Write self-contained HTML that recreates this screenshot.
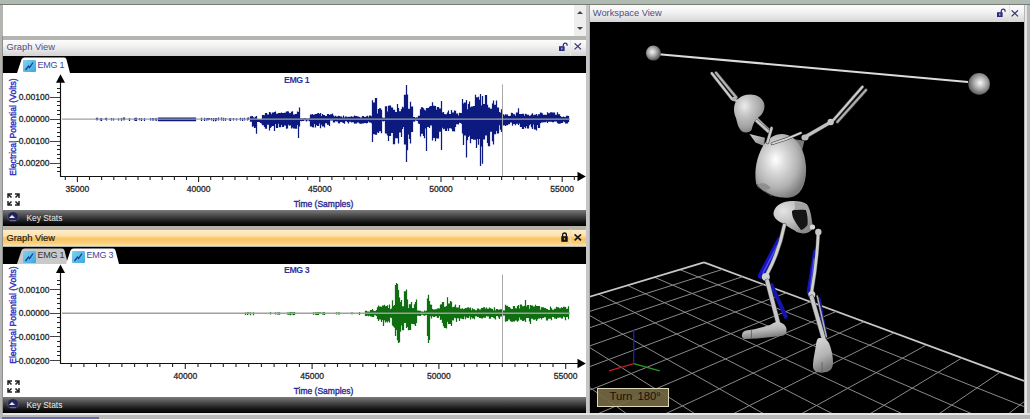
<!DOCTYPE html><html><head><meta charset="utf-8"><style>
html,body{margin:0;padding:0;}
body{width:1030px;height:419px;overflow:hidden;position:relative;background:#b1bab0;font-family:"Liberation Sans", sans-serif;}
.a{position:absolute;}
.t{position:absolute;white-space:nowrap;}
</style></head><body>
<div class="a" style="left:0;top:4px;width:590px;height:415px;background:#b3b5b1;"></div>
<div class="a" style="left:2px;top:36px;width:1px;height:377px;background:#8e8e8e;"></div>
<div class="a" style="left:0;top:4px;width:1030px;height:1px;background:#747c73;"></div>
<div class="a" style="left:3px;top:5px;width:571px;height:31px;background:#fff;"></div>
<div class="a" style="left:574px;top:5px;width:12px;height:31px;background:#eeeeee;"></div>
<div class="a" style="left:577px;top:11px;width:0;height:0;border-left:3px solid transparent;border-right:3px solid transparent;border-bottom:3px solid #444;"></div>
<div class="a" style="left:577px;top:27px;width:0;height:0;border-left:3px solid transparent;border-right:3px solid transparent;border-top:3px solid #444;"></div>
<div class="a" style="left:3px;top:40px;width:583px;height:16px;background:linear-gradient(#fcfcfc,#f1f1f1 40%,#d3d3d3);"></div>
<div class="t" style="left:6.50px;top:42.30px;font-size:9.3px;line-height:11.16px;color:#4e4e7e;font-weight:normal;">Graph View</div>
<div class="a" style="left:570px;top:40px;width:1px;height:16px;background:#e8e8e8;"></div>
<svg class="a" style="left:559.4px;top:42px" width="10" height="10" viewBox="0 0 10 10">
<path d="M4.3 4.6 V3 A1.9 1.9 0 0 1 8.1 3 V3.8" fill="none" stroke="#2a2a80" stroke-width="1.2"/>
<rect x="0" y="4.2" width="5.6" height="4.8" fill="#2a2a80"/><rect x="2.2" y="5.6" width="1.2" height="2" fill="#c8c8e0"/></svg>
<svg class="a" style="left:573.8px;top:43.4px" width="8" height="7" viewBox="0 0 8 7">
<path d="M0.6 0.4 L7 6.4 M7 0.4 L0.6 6.4" stroke="#3a3a70" stroke-width="1.3"/></svg>
<div class="a" style="left:3px;top:56.400000000000006px;width:583px;height:17px;background:#000;"></div>
<svg class="a" style="left:17px;top:56px" width="54" height="18" viewBox="0 0 54 18"><path d="M0 17 L4.5 3.5 Q5.5 1.5 7.5 1.5 L47 1.5 Q49 1.5 49.5 3.5 L53 17 Z" fill="#ffffff"/></svg>
<div class="a" style="left:23px;top:60px;width:13px;height:12px;background:linear-gradient(135deg,#7fd3ef,#3aa8dc);border-radius:1px;"></div>
<svg class="a" style="left:23px;top:60px" width="13" height="12" viewBox="0 0 13 12"><path d="M2.5 10 L5.5 6 L6.5 7.5 L10 2.5" fill="none" stroke="#1a3a9a" stroke-width="1.3"/></svg>
<div class="t" style="left:37.60px;top:59.88px;font-size:9px;line-height:10.80px;color:#45459a;font-weight:normal;letter-spacing:-0.3px;">EMG 1</div>
<div class="a" style="left:3px;top:73.4px;width:583px;height:136.6px;background:#fff;"></div>
<svg class="a" style="left:0;top:0" width="590" height="419" viewBox="0 0 590 419"><path d="M96.5 117.8V120.2M97.5 117.8V120.2M100.5 118.3V120.6M101.5 118.0V121.0M105.5 117.9V120.1M106.5 117.7V120.5M111.5 117.9V120.4M113.5 118.3V120.4M118.5 118.3V120.4M121.5 117.9V120.8M123.5 117.6V120.3M124.5 117.6V120.3M129.5 117.9V121.0M134.5 118.3V120.5M135.5 117.8V120.9M136.5 117.8V120.9M139.5 118.0V120.3M141.5 118.1V121.0M144.5 118.1V121.0M150.5 118.0V120.6M152.5 118.0V120.6M153.5 118.2V120.4M155.5 118.2V120.4M156.5 118.2V120.8M158.5 117.4V121.2M159.5 117.4V121.2M160.5 117.4V121.2M161.5 117.4V121.2M162.5 117.4V121.2M163.5 117.4V121.2M164.5 117.4V121.2M165.5 117.4V121.2M166.5 117.4V121.2M167.5 117.4V121.2M168.5 117.4V121.2M169.5 117.4V121.2M170.5 117.4V121.2M171.5 117.4V121.2M172.5 117.4V121.2M173.5 117.4V121.2M174.5 117.4V121.2M175.5 117.4V121.2M176.5 117.4V121.2M177.5 117.4V121.2M178.5 117.4V121.2M179.5 117.4V121.2M180.5 117.4V121.2M181.5 117.4V121.2M182.5 117.4V121.2M183.5 117.4V121.2M184.5 117.4V121.2M185.5 117.4V121.2M186.5 117.4V121.2M187.5 117.4V121.2M188.5 117.4V121.2M189.5 117.4V121.2M190.5 117.4V121.2M191.5 117.4V121.2M192.5 117.4V121.2M193.5 117.4V121.2M194.5 117.4V121.2M195.5 117.4V121.2M201.5 117.7V121.0M204.5 117.7V121.0M206.5 118.3V120.4M207.5 117.9V120.2M208.5 117.9V120.2M209.5 118.0V120.1M211.5 118.1V120.6M213.5 117.9V121.2M215.5 117.9V121.2M216.5 118.1V120.5M218.5 117.6V120.6M221.5 117.6V120.6M223.5 117.7V120.8M225.5 117.9V120.7M229.5 118.2V120.6M230.5 117.9V121.0M233.5 117.9V120.6M236.5 118.2V120.4M240.5 117.7V120.6M242.5 118.0V120.9M244.5 117.7V120.5M247.5 117.7V120.5M248.5 117.6V120.1M250.5 116.3V121.7M251.5 116.3V121.7M252.5 116.0V126.7M253.5 117.3V126.2M254.5 117.7V127.9M255.5 116.7V127.8M256.5 116.0V133.8M257.5 119.0V121.9M258.5 119.1V121.9M259.5 119.1V121.9M260.5 119.0V122.9M261.5 119.0V123.4M262.5 114.9V125.2M263.5 114.9V125.2M264.5 115.3V127.1M265.5 113.1V128.7M266.5 113.1V128.7M267.5 114.6V124.8M268.5 114.6V124.8M269.5 112.0V130.5M270.5 112.4V128.1M271.5 114.3V126.7M272.5 112.6V125.9M273.5 112.6V125.9M274.5 112.0V131.0M275.5 111.4V124.0M276.5 113.8V128.0M277.5 113.8V128.0M278.5 113.0V123.7M279.5 113.0V127.3M280.5 113.0V127.3M281.5 112.4V125.1M282.5 113.0V127.0M283.5 113.0V127.0M284.5 112.8V125.4M285.5 112.8V125.4M286.5 111.4V128.8M287.5 111.3V128.6M288.5 111.5V124.7M289.5 113.3V125.8M290.5 113.1V125.2M291.5 111.7V128.6M292.5 111.2V127.5M293.5 114.5V128.5M294.5 114.5V128.5M295.5 114.1V128.8M296.5 114.1V128.8M297.5 111.4V124.9M298.5 112.0V138.0M299.5 107.5V126.4M300.5 118.3V120.9M301.5 118.4V121.2M302.5 118.3V120.9M303.5 118.3V121.0M304.5 118.2V120.3M305.5 118.0V120.4M306.5 118.4V121.4M307.5 118.4V120.4M308.5 118.4V120.4M309.5 118.1V121.2M310.5 114.6V126.5M311.5 114.6V126.5M312.5 114.1V127.2M313.5 115.0V127.6M314.5 114.5V123.9M315.5 113.9V127.6M316.5 114.0V124.9M317.5 113.3V126.1M318.5 112.9V125.9M319.5 113.9V123.6M320.5 113.1V128.3M321.5 116.1V124.8M322.5 113.9V126.5M323.5 115.0V126.3M324.5 115.1V127.6M325.5 116.1V123.3M326.5 116.1V123.3M327.5 114.1V124.7M328.5 114.1V124.7M329.5 115.1V126.1M330.5 114.2V120.6M331.5 114.2V120.6M332.5 113.4V120.4M333.5 115.5V122.5M334.5 116.5V122.5M335.5 115.7V121.3M336.5 116.4V121.5M337.5 116.4V121.5M338.5 115.7V123.3M339.5 116.1V123.4M340.5 116.4V121.9M341.5 116.4V121.9M342.5 117.5V122.6M343.5 115.5V123.0M344.5 117.4V123.8M345.5 116.6V121.2M346.5 116.6V121.2M347.5 117.2V122.3M348.5 116.8V123.5M349.5 116.8V121.7M350.5 116.8V121.7M351.5 116.2V122.6M352.5 116.7V122.2M353.5 116.7V122.2M354.5 115.6V123.7M355.5 116.0V123.4M356.5 116.0V123.4M357.5 116.5V122.5M358.5 116.5V122.5M359.5 117.0V123.4M360.5 117.4V123.7M361.5 117.4V123.7M362.5 116.1V123.4M363.5 116.1V123.4M364.5 117.1V123.0M365.5 117.1V123.0M366.5 116.2V123.6M367.5 115.8V123.1M368.5 117.2V121.5M369.5 115.6V122.6M370.5 115.6V122.6M371.5 116.2V123.2M372.5 100.2V142.0M373.5 102.6V134.3M374.5 102.6V134.3M375.5 98.1V134.8M376.5 98.1V134.8M377.5 113.5V132.2M378.5 108.9V132.9M379.5 108.3V131.3M380.5 108.3V131.3M381.5 109.7V133.3M382.5 117.6V121.0M383.5 117.8V121.6M384.5 117.8V121.1M385.5 106.2V133.4M386.5 106.2V133.4M387.5 111.4V135.6M388.5 105.7V141.0M389.5 105.6V135.9M390.5 105.6V135.9M391.5 107.4V133.1M392.5 107.4V133.1M393.5 109.7V144.3M394.5 109.7V144.3M395.5 112.1V138.3M396.5 112.1V138.3M397.5 103.9V138.2M398.5 108.0V143.6M399.5 111.2V132.5M400.5 111.2V132.5M401.5 109.1V137.0M402.5 106.8V128.9M403.5 107.5V127.0M404.5 94.8V144.5M405.5 94.8V144.5M406.5 85.0V162.0M407.5 94.4V150.2M408.5 108.7V134.4M409.5 108.7V138.9M410.5 101.8V143.5M411.5 106.5V131.9M412.5 106.5V131.9M413.5 117.0V121.5M414.5 117.1V121.7M415.5 117.7V120.5M416.5 117.3V120.8M417.5 117.5V121.1M418.5 115.8V123.5M419.5 115.8V124.1M420.5 109.3V136.6M421.5 107.2V133.7M422.5 107.2V133.7M423.5 108.2V135.9M424.5 109.7V138.3M425.5 110.5V128.6M426.5 108.0V151.0M427.5 107.9V127.0M428.5 107.9V127.0M429.5 106.7V128.1M430.5 106.1V125.5M431.5 106.1V125.5M432.5 102.2V140.5M433.5 105.8V138.1M434.5 105.8V138.1M435.5 106.1V141.2M436.5 109.8V138.2M437.5 107.1V138.6M438.5 107.1V138.6M439.5 108.4V131.7M440.5 108.4V131.7M441.5 101.0V150.0M442.5 112.6V127.7M443.5 112.0V129.3M444.5 114.0V128.8M445.5 114.3V131.1M446.5 114.3V131.1M447.5 112.5V128.5M448.5 110.6V130.9M449.5 114.0V128.3M450.5 114.0V128.3M451.5 110.1V128.7M452.5 112.5V131.2M453.5 112.5V131.2M454.5 110.5V131.5M455.5 110.8V126.9M456.5 113.5V124.2M457.5 113.5V124.2M458.5 115.4V124.4M459.5 112.7V122.8M460.5 113.1V123.1M461.5 113.1V123.8M462.5 99.0V133.6M463.5 103.6V145.0M464.5 102.5V135.6M465.5 102.5V135.6M466.5 100.0V157.4M467.5 109.3V140.2M468.5 103.9V137.1M469.5 101.4V135.8M470.5 107.3V143.2M471.5 106.6V139.0M472.5 106.6V139.0M473.5 106.0V139.7M474.5 106.0V139.7M475.5 94.8V139.7M476.5 97.3V148.1M477.5 97.4V139.1M478.5 96.8V144.7M479.5 99.7V139.1M480.5 94.0V166.0M481.5 105.5V146.6M482.5 96.0V163.7M483.5 104.1V139.6M484.5 104.1V139.6M485.5 94.9V135.5M486.5 94.9V135.5M487.5 104.8V142.9M488.5 107.5V146.2M489.5 107.5V146.2M490.5 108.8V131.8M491.5 108.8V131.8M492.5 103.4V141.3M493.5 100.6V144.4M494.5 104.8V134.2M495.5 104.8V134.2M496.5 100.4V131.0M497.5 107.6V133.5M498.5 107.6V133.5M499.5 111.9V125.3M500.5 112.7V129.8M501.5 109.2V132.1M502.5 114.3V125.6M503.5 114.3V125.6M504.5 115.5V125.2M505.5 114.2V125.9M506.5 114.4V125.3M507.5 114.4V125.3M508.5 115.9V124.2M509.5 115.9V124.2M510.5 115.8V122.4M511.5 112.8V122.6M512.5 112.9V125.8M513.5 114.2V123.9M514.5 114.2V123.9M515.5 115.8V125.3M516.5 112.4V123.8M517.5 112.4V123.8M518.5 108.3V124.9M519.5 113.9V123.4M520.5 114.0V126.9M521.5 114.0V126.9M522.5 113.8V129.0M523.5 113.8V129.0M524.5 115.8V127.1M525.5 113.8V128.3M526.5 114.3V126.2M527.5 114.7V128.5M528.5 114.7V128.5M529.5 116.1V125.3M530.5 115.4V124.3M531.5 114.6V127.3M532.5 113.3V128.9M533.5 115.3V124.5M534.5 114.8V129.4M535.5 114.8V129.4M536.5 114.0V130.4M537.5 115.7V124.9M538.5 114.3V128.0M539.5 114.3V128.0M540.5 112.6V123.3M541.5 112.8V122.4M542.5 113.5V122.6M543.5 114.9V122.2M544.5 114.7V122.3M545.5 114.7V122.3M546.5 115.0V121.6M547.5 112.2V122.9M548.5 113.2V121.7M549.5 113.2V121.7M550.5 112.2V121.7M551.5 112.2V121.7M552.5 112.5V122.2M553.5 112.5V122.2M554.5 112.4V121.5M555.5 114.8V121.5M556.5 114.8V121.5M557.5 112.3V123.1M558.5 114.2V123.7M559.5 114.2V123.7M560.5 116.0V123.5M561.5 117.1V123.1M562.5 117.1V123.1M563.5 116.5V121.4M564.5 117.0V122.1M565.5 117.3V123.4M566.5 115.7V123.6M567.5 115.7V123.6M568.5 115.9V122.0" stroke="#0c1a80" stroke-width="1.25" fill="none"/><path d="M62 119.1H570" stroke="#a0a0a0" stroke-width="1.4"/><path d="M502.5 84.4V176" stroke="#a8a8a8" stroke-width="1"/><path d="M60.5 82.2V176.5H578" stroke="#111" stroke-width="1.15" fill="none"/><path d="M60.5 74.2 L56 82.7 L65 82.7Z" fill="#000"/><path d="M585.8 176.5 L577.5 171.8 L577.5 181.2Z" fill="#000"/><path d="M57 171.5H60" stroke="#222" stroke-width="1"/><path d="M57 167.5H60" stroke="#222" stroke-width="1"/><path d="M50 163.5H60" stroke="#444" stroke-width="1"/><path d="M57 158.5H60" stroke="#222" stroke-width="1"/><path d="M57 154.5H60" stroke="#222" stroke-width="1"/><path d="M57 149.5H60" stroke="#222" stroke-width="1"/><path d="M57 145.5H60" stroke="#222" stroke-width="1"/><path d="M50 141.5H60" stroke="#444" stroke-width="1"/><path d="M57 136.5H60" stroke="#222" stroke-width="1"/><path d="M57 132.5H60" stroke="#222" stroke-width="1"/><path d="M57 127.5H60" stroke="#222" stroke-width="1"/><path d="M57 123.5H60" stroke="#222" stroke-width="1"/><path d="M50 119.5H60" stroke="#444" stroke-width="1"/><path d="M57 114.5H60" stroke="#222" stroke-width="1"/><path d="M57 110.5H60" stroke="#222" stroke-width="1"/><path d="M57 105.5H60" stroke="#222" stroke-width="1"/><path d="M57 101.5H60" stroke="#222" stroke-width="1"/><path d="M50 97.5H60" stroke="#444" stroke-width="1"/><path d="M57 92.5H60" stroke="#222" stroke-width="1"/><path d="M57 88.5H60" stroke="#222" stroke-width="1"/><path d="M65.3 176V180" stroke="#222" stroke-width="1.1"/><path d="M77.4 176V182" stroke="#222" stroke-width="1.1"/><path d="M89.5 176V180" stroke="#222" stroke-width="1.1"/><path d="M101.6 176V180" stroke="#222" stroke-width="1.1"/><path d="M113.8 176V180" stroke="#222" stroke-width="1.1"/><path d="M125.9 176V180" stroke="#222" stroke-width="1.1"/><path d="M138.0 176V180" stroke="#222" stroke-width="1.1"/><path d="M150.1 176V180" stroke="#222" stroke-width="1.1"/><path d="M162.2 176V180" stroke="#222" stroke-width="1.1"/><path d="M174.4 176V180" stroke="#222" stroke-width="1.1"/><path d="M186.5 176V180" stroke="#222" stroke-width="1.1"/><path d="M198.6 176V182" stroke="#222" stroke-width="1.1"/><path d="M210.7 176V180" stroke="#222" stroke-width="1.1"/><path d="M222.8 176V180" stroke="#222" stroke-width="1.1"/><path d="M235.0 176V180" stroke="#222" stroke-width="1.1"/><path d="M247.1 176V180" stroke="#222" stroke-width="1.1"/><path d="M259.2 176V180" stroke="#222" stroke-width="1.1"/><path d="M271.3 176V180" stroke="#222" stroke-width="1.1"/><path d="M283.4 176V180" stroke="#222" stroke-width="1.1"/><path d="M295.6 176V180" stroke="#222" stroke-width="1.1"/><path d="M307.7 176V180" stroke="#222" stroke-width="1.1"/><path d="M319.8 176V182" stroke="#222" stroke-width="1.1"/><path d="M331.9 176V180" stroke="#222" stroke-width="1.1"/><path d="M344.0 176V180" stroke="#222" stroke-width="1.1"/><path d="M356.2 176V180" stroke="#222" stroke-width="1.1"/><path d="M368.3 176V180" stroke="#222" stroke-width="1.1"/><path d="M380.4 176V180" stroke="#222" stroke-width="1.1"/><path d="M392.5 176V180" stroke="#222" stroke-width="1.1"/><path d="M404.6 176V180" stroke="#222" stroke-width="1.1"/><path d="M416.8 176V180" stroke="#222" stroke-width="1.1"/><path d="M428.9 176V180" stroke="#222" stroke-width="1.1"/><path d="M441.0 176V182" stroke="#222" stroke-width="1.1"/><path d="M453.1 176V180" stroke="#222" stroke-width="1.1"/><path d="M465.2 176V180" stroke="#222" stroke-width="1.1"/><path d="M477.4 176V180" stroke="#222" stroke-width="1.1"/><path d="M489.5 176V180" stroke="#222" stroke-width="1.1"/><path d="M501.6 176V180" stroke="#222" stroke-width="1.1"/><path d="M513.7 176V180" stroke="#222" stroke-width="1.1"/><path d="M525.8 176V180" stroke="#222" stroke-width="1.1"/><path d="M538.0 176V180" stroke="#222" stroke-width="1.1"/><path d="M550.1 176V180" stroke="#222" stroke-width="1.1"/><path d="M562.2 176V182" stroke="#222" stroke-width="1.1"/><path d="M574.3 176V180" stroke="#222" stroke-width="1.1"/></svg>
<div class="t" style="left:-22.60px;width:200px;text-align:center;top:183.75px;font-size:8.5px;line-height:10.20px;color:#2a2a2a;font-weight:normal;-webkit-text-stroke:0.3px #2a2a2a;">35000</div>
<div class="t" style="left:98.60px;width:200px;text-align:center;top:183.75px;font-size:8.5px;line-height:10.20px;color:#2a2a2a;font-weight:normal;-webkit-text-stroke:0.3px #2a2a2a;">40000</div>
<div class="t" style="left:219.80px;width:200px;text-align:center;top:183.75px;font-size:8.5px;line-height:10.20px;color:#2a2a2a;font-weight:normal;-webkit-text-stroke:0.3px #2a2a2a;">45000</div>
<div class="t" style="left:341.00px;width:200px;text-align:center;top:183.75px;font-size:8.5px;line-height:10.20px;color:#2a2a2a;font-weight:normal;-webkit-text-stroke:0.3px #2a2a2a;">50000</div>
<div class="t" style="left:462.20px;width:200px;text-align:center;top:183.75px;font-size:8.5px;line-height:10.20px;color:#2a2a2a;font-weight:normal;-webkit-text-stroke:0.3px #2a2a2a;">55000</div>
<div class="t" style="left:-150.50px;width:200px;text-align:right;top:92.25px;font-size:8.5px;line-height:10.20px;color:#2a2a2a;font-weight:normal;-webkit-text-stroke:0.3px #2a2a2a;">0.00100</div>
<div class="t" style="left:-150.50px;width:200px;text-align:right;top:114.25px;font-size:8.5px;line-height:10.20px;color:#2a2a2a;font-weight:normal;-webkit-text-stroke:0.3px #2a2a2a;">0.00000</div>
<div class="t" style="left:-150.50px;width:200px;text-align:right;top:136.25px;font-size:8.5px;line-height:10.20px;color:#2a2a2a;font-weight:normal;-webkit-text-stroke:0.3px #2a2a2a;">-0.00100</div>
<div class="t" style="left:-150.50px;width:200px;text-align:right;top:158.25px;font-size:8.5px;line-height:10.20px;color:#2a2a2a;font-weight:normal;-webkit-text-stroke:0.3px #2a2a2a;">-0.00200</div>
<div class="t" style="left:223.50px;width:200px;text-align:center;top:198.95px;font-size:8.5px;line-height:10.20px;color:#2a2a90;font-weight:normal;-webkit-text-stroke:0.35px #2a2a90;">Time (Samples)</div>
<div class="t" style="left:196.60px;width:200px;text-align:center;top:74.67px;font-size:8.8px;line-height:10.56px;color:#30309a;font-weight:bold;letter-spacing:-0.45px;">EMG 1</div>
<div class="t" style="left:-87.15px;top:121.60px;width:200px;text-align:center;font-size:8.6px;line-height:10.2px;color:#2e2ec0;-webkit-text-stroke:0.35px #2e2ec0;transform:rotate(-90deg);">Electrical Potential (Volts)</div>
<svg class="a" style="left:7px;top:193px" width="13" height="13" viewBox="0 0 13 13" fill="none" stroke="#222" stroke-width="1.5">
<path d="M1 5 V1 H5 M1 1 L4.5 4.5"/><path d="M12 5 V1 H8 M12 1 L8.5 4.5"/><path d="M1 8 V12 H5 M1 12 L4.5 8.5"/><path d="M12 8 V12 H8 M12 12 L8.5 8.5"/></svg>
<div class="a" style="left:3px;top:210px;width:583px;height:15.5px;background:linear-gradient(#7a7a7a,#4a4a4a 35%,#141414 75%,#000);"></div>
<div class="a" style="left:6.8px;top:211.9px;width:12px;height:10.6px;border-radius:50%;background:radial-gradient(circle at 50% 50%,#2a2a5e 0%,#22224e 55%,#5c5c92 80%,#33335a 100%);"></div>
<div class="a" style="left:9px;top:215.2px;width:0;height:0;border-left:3.8px solid transparent;border-right:3.8px solid transparent;border-bottom:3.6px solid #e8e8ff;"></div>
<div class="a" style="left:10px;top:219.6px;width:5.5px;height:0.8px;background:#6a6a9a;"></div>
<div class="t" style="left:26.50px;top:212.65px;font-size:8.4px;line-height:10.08px;color:#eeeeee;font-weight:normal;">Key Stats</div>
<div class="a" style="left:3px;top:225.5px;width:583px;height:4.3px;background:#b6b2a6;"></div>
<div class="a" style="left:3px;top:229.8px;width:583px;height:16.5px;background:linear-gradient(#fdecc8,#fde3b3 35%,#f8c565 52%,#f9cd78 78%,#fce39c);"></div>
<div class="t" style="left:6.50px;top:232.60px;font-size:9.3px;line-height:11.16px;color:#2a2210;font-weight:normal;-webkit-text-stroke:0.2px #2a2210;">Graph View</div>
<div class="a" style="left:570px;top:229px;width:1px;height:17px;background:#f3dcae;"></div>
<svg class="a" style="left:560.6px;top:232px" width="10" height="11" viewBox="0 0 10 11">
<path d="M1.6 4.5 V2.9 A1.9 1.9 0 0 1 5.4 2.9 V4.5" fill="none" stroke="#111" stroke-width="1.3"/>
<rect x="0.3" y="4.2" width="6.4" height="5.6" fill="#111"/><rect x="2.9" y="5.8" width="1.2" height="2" fill="#bba070"/></svg>
<svg class="a" style="left:573.6px;top:233.6px" width="8" height="7" viewBox="0 0 8 7">
<path d="M0.6 0.4 L7 6.4 M7 0.4 L0.6 6.4" stroke="#1a1a1a" stroke-width="1.6"/></svg>
<div class="a" style="left:3px;top:246.60000000000002px;width:583px;height:17px;background:#000;"></div>
<svg class="a" style="left:17px;top:246.5px" width="52" height="18" viewBox="0 0 52 18"><path d="M0 17 L4.5 3.5 Q5.5 1.5 7.5 1.5 L45 1.5 Q47 1.5 47.5 3.5 L51 17 Z" fill="#c9c9c9"/></svg>
<div class="a" style="left:23px;top:250.5px;width:13px;height:12px;background:linear-gradient(135deg,#7fd3ef,#3aa8dc);border-radius:1px;"></div>
<svg class="a" style="left:23px;top:250.5px" width="13" height="12" viewBox="0 0 13 12"><path d="M2.5 10 L5.5 6 L6.5 7.5 L10 2.5" fill="none" stroke="#1a3a9a" stroke-width="1.3"/></svg>
<div class="t" style="left:37.60px;top:250.38px;font-size:9px;line-height:10.80px;color:#333;font-weight:normal;letter-spacing:-0.3px;">EMG 1</div>
<svg class="a" style="left:66px;top:246.5px" width="54" height="18" viewBox="0 0 54 18"><path d="M0 17 L4.5 3.5 Q5.5 1.5 7.5 1.5 L47 1.5 Q49 1.5 49.5 3.5 L53 17 Z" fill="#ffffff"/></svg>
<div class="a" style="left:72px;top:250.5px;width:13px;height:12px;background:linear-gradient(135deg,#7fd3ef,#3aa8dc);border-radius:1px;"></div>
<svg class="a" style="left:72px;top:250.5px" width="13" height="12" viewBox="0 0 13 12"><path d="M2.5 10 L5.5 6 L6.5 7.5 L10 2.5" fill="none" stroke="#1a3a9a" stroke-width="1.3"/></svg>
<div class="t" style="left:86.60px;top:250.38px;font-size:9px;line-height:10.80px;color:#45459a;font-weight:normal;letter-spacing:-0.3px;">EMG 3</div>
<div class="a" style="left:3px;top:263.6px;width:583px;height:133.5px;background:#fff;"></div>
<svg class="a" style="left:0;top:0" width="590" height="419" viewBox="0 0 590 419"><path d="M245.5 312.5V314.9M247.5 312.2V315.1M248.5 312.3V314.2M250.5 312.2V315.2M253.5 312.2V315.2M270.5 312.1V314.5M275.5 312.2V314.4M277.5 312.6V314.4M278.5 312.6V314.4M279.5 312.2V314.7M287.5 312.4V314.6M288.5 312.6V314.7M289.5 312.6V314.7M290.5 312.1V315.2M291.5 312.2V314.4M292.5 312.2V314.4M293.5 312.3V315.3M294.5 312.0V314.9M313.5 312.2V314.8M315.5 312.2V314.8M316.5 312.4V314.9M317.5 312.2V314.9M318.5 312.2V314.9M319.5 312.2V314.1M320.5 312.2V314.1M322.5 312.5V314.5M323.5 312.0V314.8M324.5 312.2V315.1M336.5 312.3V314.6M338.5 312.3V314.6M339.5 312.4V314.5M351.5 312.4V314.3M352.5 312.4V314.3M359.5 312.0V315.0M365.5 310.8V316.0M366.5 310.7V316.0M367.5 311.5V315.5M368.5 311.4V316.3M369.5 311.8V315.4M370.5 310.0V316.4M371.5 310.1V316.4M372.5 309.0V317.0M373.5 310.4V316.9M374.5 310.9V315.3M375.5 310.9V315.3M376.5 309.9V316.1M377.5 307.3V319.0M378.5 305.5V320.9M379.5 306.4V319.4M380.5 306.4V319.4M381.5 307.1V322.0M382.5 305.4V320.0M383.5 305.6V326.0M384.5 304.8V320.3M385.5 306.3V322.4M386.5 305.9V321.6M387.5 305.2V322.5M388.5 307.9V321.0M389.5 304.5V322.4M390.5 309.2V317.4M391.5 308.5V317.9M392.5 300.2V325.4M393.5 306.1V326.4M394.5 305.1V327.7M395.5 285.0V336.0M396.5 283.0V330.0M397.5 284.1V340.3M398.5 290.0V343.0M399.5 297.4V342.3M400.5 301.9V331.7M401.5 300.0V325.4M402.5 306.2V330.3M403.5 306.2V330.3M404.5 291.2V323.1M405.5 291.2V323.1M406.5 289.5V327.9M407.5 299.4V327.1M408.5 308.1V330.3M409.5 304.2V330.0M410.5 304.2V330.0M411.5 301.9V323.7M412.5 307.9V323.9M413.5 307.9V323.9M414.5 304.2V324.5M415.5 301.9V326.0M416.5 299.5V322.9M417.5 310.5V315.8M418.5 310.5V315.8M419.5 310.8V315.9M420.5 310.8V315.9M421.5 311.4V314.8M422.5 311.4V314.8M423.5 311.7V315.3M424.5 310.5V315.7M425.5 311.3V315.3M426.5 310.6V315.1M427.5 298.5V336.1M428.5 294.7V343.0M429.5 301.1V340.1M430.5 304.6V316.2M431.5 304.7V318.6M432.5 309.0V316.1M433.5 309.4V317.0M434.5 309.4V317.0M435.5 309.2V316.3M436.5 309.2V316.3M437.5 308.4V317.9M438.5 308.3V317.8M439.5 308.4V315.9M440.5 304.4V320.1M441.5 304.2V319.4M442.5 302.1V322.9M443.5 302.1V326.3M444.5 306.7V327.9M445.5 306.7V327.9M446.5 306.1V328.4M447.5 297.3V321.7M448.5 303.5V324.0M449.5 303.5V324.0M450.5 301.1V324.0M451.5 301.8V326.1M452.5 307.2V320.2M453.5 307.0V320.4M454.5 306.4V317.8M455.5 304.6V318.2M456.5 307.5V322.0M457.5 307.5V318.3M458.5 307.5V318.3M459.5 305.0V321.1M460.5 308.8V318.4M461.5 308.8V318.4M462.5 308.3V318.9M463.5 309.3V319.2M464.5 308.8V316.5M465.5 308.1V319.2M466.5 308.2V317.2M467.5 307.5V318.1M468.5 307.2V318.0M469.5 308.2V316.3M470.5 307.4V319.6M471.5 310.3V317.2M472.5 308.2V318.4M473.5 309.2V318.3M474.5 309.3V319.2M475.5 310.3V316.2M476.5 310.3V316.2M477.5 308.4V317.1M478.5 308.4V317.1M479.5 309.4V318.1M480.5 309.4V318.1M481.5 308.1V318.4M482.5 308.1V318.4M483.5 307.3V317.6M484.5 307.2V317.7M485.5 308.8V317.7M486.5 307.6V316.1M487.5 308.8V316.4M488.5 308.8V316.4M489.5 307.5V318.8M490.5 308.2V318.8M491.5 308.7V317.0M492.5 308.7V317.0M493.5 310.6V317.8M494.5 307.3V318.4M495.5 310.4V319.4M496.5 309.0V316.0M497.5 309.0V316.0M498.5 310.1V317.5M499.5 309.4V319.1M500.5 309.3V316.6M501.5 309.3V316.6M502.5 309.8V315.9M503.5 310.4V315.6M504.5 310.4V315.6M505.5 304.7V321.8M506.5 305.8V321.3M507.5 305.8V321.3M508.5 306.9V319.5M509.5 306.9V319.5M510.5 308.2V321.3M511.5 309.0V321.8M512.5 309.0V321.8M513.5 305.9V321.4M514.5 305.9V321.4M515.5 308.3V320.5M516.5 308.3V320.5M517.5 306.1V321.7M518.5 305.1V320.7M519.5 308.6V317.6M520.5 304.6V319.8M521.5 304.6V319.8M522.5 306.2V320.9M523.5 306.2V320.9M524.5 305.7V320.3M525.5 300.0V322.0M526.5 306.6V317.9M527.5 304.9V318.1M528.5 304.9V318.1M529.5 308.8V321.4M530.5 305.0V324.0M531.5 305.5V318.8M532.5 305.5V318.8M533.5 306.5V319.8M534.5 306.5V319.8M535.5 304.8V319.3M536.5 305.9V321.0M537.5 306.0V319.5M538.5 305.9V318.4M539.5 305.9V318.4M540.5 309.7V318.0M541.5 307.2V319.6M542.5 307.2V318.1M543.5 307.2V318.1M544.5 308.0V317.3M545.5 308.0V317.3M546.5 309.0V320.5M547.5 309.0V320.5M548.5 310.1V318.8M549.5 310.1V318.8M550.5 306.4V318.8M551.5 308.2V320.3M552.5 309.7V317.1M553.5 309.7V317.1M554.5 308.7V318.4M555.5 308.7V318.4M556.5 306.8V319.0M557.5 307.2V317.8M558.5 307.2V317.8M559.5 308.2V317.5M560.5 308.2V317.5M561.5 307.2V318.6M562.5 308.1V318.5M563.5 306.8V316.4M564.5 306.8V317.3M565.5 307.1V320.3M566.5 308.8V316.9M567.5 308.8V316.9M568.5 306.3V319.3" stroke="#0e6e10" stroke-width="1.25" fill="none"/><path d="M62 313.2H570" stroke="#a0a0a0" stroke-width="1.4"/><path d="M502.5 274.6V363" stroke="#a8a8a8" stroke-width="1"/><path d="M60.5 272.40000000000003V363.5H578" stroke="#111" stroke-width="1.15" fill="none"/><path d="M60.5 264.40000000000003 L56 272.90000000000003 L65 272.90000000000003Z" fill="#000"/><path d="M585.8 363.5 L577.5 358.8 L577.5 368.2Z" fill="#000"/><path d="M50 360.5H60" stroke="#444" stroke-width="1"/><path d="M57 355.5H60" stroke="#222" stroke-width="1"/><path d="M57 351.5H60" stroke="#222" stroke-width="1"/><path d="M57 346.5H60" stroke="#222" stroke-width="1"/><path d="M57 341.5H60" stroke="#222" stroke-width="1"/><path d="M50 336.5H60" stroke="#444" stroke-width="1"/><path d="M57 332.5H60" stroke="#222" stroke-width="1"/><path d="M57 327.5H60" stroke="#222" stroke-width="1"/><path d="M57 322.5H60" stroke="#222" stroke-width="1"/><path d="M57 317.5H60" stroke="#222" stroke-width="1"/><path d="M50 313.5H60" stroke="#444" stroke-width="1"/><path d="M57 308.5H60" stroke="#222" stroke-width="1"/><path d="M57 303.5H60" stroke="#222" stroke-width="1"/><path d="M57 298.5H60" stroke="#222" stroke-width="1"/><path d="M57 294.5H60" stroke="#222" stroke-width="1"/><path d="M50 289.5H60" stroke="#444" stroke-width="1"/><path d="M57 284.5H60" stroke="#222" stroke-width="1"/><path d="M57 280.5H60" stroke="#222" stroke-width="1"/><path d="M71.2 363V367" stroke="#222" stroke-width="1.1"/><path d="M83.9 363V367" stroke="#222" stroke-width="1.1"/><path d="M96.5 363V367" stroke="#222" stroke-width="1.1"/><path d="M109.2 363V367" stroke="#222" stroke-width="1.1"/><path d="M121.9 363V367" stroke="#222" stroke-width="1.1"/><path d="M134.6 363V367" stroke="#222" stroke-width="1.1"/><path d="M147.3 363V367" stroke="#222" stroke-width="1.1"/><path d="M159.9 363V367" stroke="#222" stroke-width="1.1"/><path d="M172.6 363V367" stroke="#222" stroke-width="1.1"/><path d="M185.3 363V369" stroke="#222" stroke-width="1.1"/><path d="M198.0 363V367" stroke="#222" stroke-width="1.1"/><path d="M210.7 363V367" stroke="#222" stroke-width="1.1"/><path d="M223.3 363V367" stroke="#222" stroke-width="1.1"/><path d="M236.0 363V367" stroke="#222" stroke-width="1.1"/><path d="M248.7 363V367" stroke="#222" stroke-width="1.1"/><path d="M261.4 363V367" stroke="#222" stroke-width="1.1"/><path d="M274.1 363V367" stroke="#222" stroke-width="1.1"/><path d="M286.7 363V367" stroke="#222" stroke-width="1.1"/><path d="M299.4 363V367" stroke="#222" stroke-width="1.1"/><path d="M312.1 363V369" stroke="#222" stroke-width="1.1"/><path d="M324.8 363V367" stroke="#222" stroke-width="1.1"/><path d="M337.5 363V367" stroke="#222" stroke-width="1.1"/><path d="M350.1 363V367" stroke="#222" stroke-width="1.1"/><path d="M362.8 363V367" stroke="#222" stroke-width="1.1"/><path d="M375.5 363V367" stroke="#222" stroke-width="1.1"/><path d="M388.2 363V367" stroke="#222" stroke-width="1.1"/><path d="M400.9 363V367" stroke="#222" stroke-width="1.1"/><path d="M413.5 363V367" stroke="#222" stroke-width="1.1"/><path d="M426.2 363V367" stroke="#222" stroke-width="1.1"/><path d="M438.9 363V369" stroke="#222" stroke-width="1.1"/><path d="M451.6 363V367" stroke="#222" stroke-width="1.1"/><path d="M464.3 363V367" stroke="#222" stroke-width="1.1"/><path d="M476.9 363V367" stroke="#222" stroke-width="1.1"/><path d="M489.6 363V367" stroke="#222" stroke-width="1.1"/><path d="M502.3 363V367" stroke="#222" stroke-width="1.1"/><path d="M515.0 363V367" stroke="#222" stroke-width="1.1"/><path d="M527.7 363V367" stroke="#222" stroke-width="1.1"/><path d="M540.3 363V367" stroke="#222" stroke-width="1.1"/><path d="M553.0 363V367" stroke="#222" stroke-width="1.1"/><path d="M565.7 363V369" stroke="#222" stroke-width="1.1"/></svg>
<div class="t" style="left:85.30px;width:200px;text-align:center;top:370.75px;font-size:8.5px;line-height:10.20px;color:#2a2a2a;font-weight:normal;-webkit-text-stroke:0.3px #2a2a2a;">40000</div>
<div class="t" style="left:212.10px;width:200px;text-align:center;top:370.75px;font-size:8.5px;line-height:10.20px;color:#2a2a2a;font-weight:normal;-webkit-text-stroke:0.3px #2a2a2a;">45000</div>
<div class="t" style="left:338.90px;width:200px;text-align:center;top:370.75px;font-size:8.5px;line-height:10.20px;color:#2a2a2a;font-weight:normal;-webkit-text-stroke:0.3px #2a2a2a;">50000</div>
<div class="t" style="left:465.70px;width:200px;text-align:center;top:370.75px;font-size:8.5px;line-height:10.20px;color:#2a2a2a;font-weight:normal;-webkit-text-stroke:0.3px #2a2a2a;">55000</div>
<div class="t" style="left:-150.50px;width:200px;text-align:right;top:284.65px;font-size:8.5px;line-height:10.20px;color:#2a2a2a;font-weight:normal;-webkit-text-stroke:0.3px #2a2a2a;">0.00100</div>
<div class="t" style="left:-150.50px;width:200px;text-align:right;top:308.35px;font-size:8.5px;line-height:10.20px;color:#2a2a2a;font-weight:normal;-webkit-text-stroke:0.3px #2a2a2a;">0.00000</div>
<div class="t" style="left:-150.50px;width:200px;text-align:right;top:332.05px;font-size:8.5px;line-height:10.20px;color:#2a2a2a;font-weight:normal;-webkit-text-stroke:0.3px #2a2a2a;">-0.00100</div>
<div class="t" style="left:-150.50px;width:200px;text-align:right;top:355.75px;font-size:8.5px;line-height:10.20px;color:#2a2a2a;font-weight:normal;-webkit-text-stroke:0.3px #2a2a2a;">-0.00200</div>
<div class="t" style="left:223.50px;width:200px;text-align:center;top:385.95px;font-size:8.5px;line-height:10.20px;color:#2a2a90;font-weight:normal;-webkit-text-stroke:0.35px #2a2a90;">Time (Samples)</div>
<div class="t" style="left:196.60px;width:200px;text-align:center;top:264.87px;font-size:8.8px;line-height:10.56px;color:#30309a;font-weight:bold;letter-spacing:-0.45px;">EMG 3</div>
<div class="t" style="left:-87.15px;top:310.20px;width:200px;text-align:center;font-size:8.6px;line-height:10.2px;color:#2e2ec0;-webkit-text-stroke:0.35px #2e2ec0;transform:rotate(-90deg);">Electrical Potential (Volts)</div>
<svg class="a" style="left:7px;top:380px" width="13" height="13" viewBox="0 0 13 13" fill="none" stroke="#222" stroke-width="1.5">
<path d="M1 5 V1 H5 M1 1 L4.5 4.5"/><path d="M12 5 V1 H8 M12 1 L8.5 4.5"/><path d="M1 8 V12 H5 M1 12 L4.5 8.5"/><path d="M12 8 V12 H8 M12 12 L8.5 8.5"/></svg>
<div class="a" style="left:3px;top:397px;width:583px;height:15.5px;background:linear-gradient(#7a7a7a,#4a4a4a 35%,#141414 75%,#000);"></div>
<div class="a" style="left:6.8px;top:398.9px;width:12px;height:10.6px;border-radius:50%;background:radial-gradient(circle at 50% 50%,#2a2a5e 0%,#22224e 55%,#5c5c92 80%,#33335a 100%);"></div>
<div class="a" style="left:9px;top:402.2px;width:0;height:0;border-left:3.8px solid transparent;border-right:3.8px solid transparent;border-bottom:3.6px solid #e8e8ff;"></div>
<div class="a" style="left:10px;top:406.6px;width:5.5px;height:0.8px;background:#6a6a9a;"></div>
<div class="t" style="left:26.50px;top:399.65px;font-size:8.4px;line-height:10.08px;color:#eeeeee;font-weight:normal;">Key Stats</div>
<div class="a" style="left:586px;top:5px;width:4px;height:414px;background:#c6c6c6;"></div>
<div class="a" style="left:589px;top:5px;width:1px;height:414px;background:#a8a8a8;"></div>
<div class="a" style="left:590px;top:5px;width:434px;height:17px;background:linear-gradient(#fcfcfc,#f3f3f3 40%,#d6d6d6);"></div>
<div class="t" style="left:592.80px;top:7.80px;font-size:9.3px;line-height:11.16px;color:#4e4e7e;font-weight:normal;">Workspace View</div>
<div class="a" style="left:1009px;top:5px;width:1px;height:17px;background:#e4e4e4;"></div>
<svg class="a" style="left:997.3px;top:8px" width="10" height="10" viewBox="0 0 10 10">
<path d="M4.3 4.6 V3 A1.9 1.9 0 0 1 8.1 3 V3.8" fill="none" stroke="#2a2a80" stroke-width="1.2"/>
<rect x="0" y="4.2" width="5.6" height="4.8" fill="#2a2a80"/><rect x="2.2" y="5.6" width="1.2" height="2" fill="#c8c8e0"/></svg>
<svg class="a" style="left:1011.3px;top:9.8px" width="8" height="7" viewBox="0 0 8 7">
<path d="M0.6 0.4 L7 6.4 M7 0.4 L0.6 6.4" stroke="#3a3a70" stroke-width="1.3"/></svg>
<div class="a" style="left:1024px;top:5px;width:6px;height:414px;background:#b8b8b8;"></div>
<div class="a" style="left:1025px;top:5px;width:2px;height:414px;background:#e6e6e6;"></div>
<div class="a" style="left:590px;top:22px;width:434px;height:390.5px;background:#000;overflow:hidden;">
<svg class="a" style="left:-590px;top:-22px" width="1030" height="419" viewBox="0 0 1030 419">
<path d="M704.0 262.4L1139.1 423.6" stroke="#c8c8c8" stroke-width="1.7"/>
<path d="M680.0 269.7L1119.3 444.5" stroke="#8a8a8a" stroke-width="1.0"/>
<path d="M654.5 277.3L1097.4 467.7" stroke="#8a8a8a" stroke-width="1.0"/>
<path d="M627.5 285.4L1072.9 493.6" stroke="#8a8a8a" stroke-width="1.0"/>
<path d="M598.7 294.1L1045.4 522.6" stroke="#8a8a8a" stroke-width="1.0"/>
<path d="M568.0 303.3L1014.5 555.4" stroke="#8a8a8a" stroke-width="1.0"/>
<path d="M535.2 313.2L979.2 592.7" stroke="#8a8a8a" stroke-width="1.0"/>
<path d="M500.1 323.8L938.7 635.5" stroke="#8a8a8a" stroke-width="1.0"/>
<path d="M462.4 335.1L891.7 685.2" stroke="#8a8a8a" stroke-width="1.0"/>
<path d="M421.8 347.3L836.5 743.6" stroke="#8a8a8a" stroke-width="1.0"/>
<path d="M704.0 262.4L421.8 347.3" stroke="#c8c8c8" stroke-width="1.7"/>
<path d="M722.7 269.3L435.4 360.2" stroke="#8a8a8a" stroke-width="1.0"/>
<path d="M742.5 276.7L450.1 374.3" stroke="#8a8a8a" stroke-width="1.0"/>
<path d="M763.6 284.5L466.1 389.6" stroke="#8a8a8a" stroke-width="1.0"/>
<path d="M786.2 292.9L483.7 406.4" stroke="#8a8a8a" stroke-width="1.0"/>
<path d="M810.3 301.8L503.0 424.9" stroke="#8a8a8a" stroke-width="1.0"/>
<path d="M836.2 311.4L524.4 445.4" stroke="#8a8a8a" stroke-width="1.0"/>
<path d="M864.1 321.7L548.2 468.1" stroke="#8a8a8a" stroke-width="1.0"/>
<path d="M894.1 332.8L574.8 493.5" stroke="#8a8a8a" stroke-width="1.0"/>
<path d="M926.6 344.9L604.7 522.1" stroke="#8a8a8a" stroke-width="1.0"/>
<path d="M961.9 357.9L638.7 554.5" stroke="#8a8a8a" stroke-width="1.0"/>
<path d="M1000.3 372.1L677.5 591.6" stroke="#8a8a8a" stroke-width="1.0"/>
<path d="M1042.3 387.7L722.3 634.4" stroke="#8a8a8a" stroke-width="1.0"/>
<path d="M1088.3 404.7L774.6 684.4" stroke="#8a8a8a" stroke-width="1.0"/>
<path d="M1139.1 423.6L836.5 743.6" stroke="#8a8a8a" stroke-width="1.0"/>
<defs>
<radialGradient id="sph" cx="0.42" cy="0.42" r="0.6"><stop offset="0" stop-color="#f4f4f4"/><stop offset="0.5" stop-color="#a8a8a8"/><stop offset="1" stop-color="#4a4a4a"/></radialGradient>
<radialGradient id="sph2" cx="0.55" cy="0.45" r="0.6"><stop offset="0" stop-color="#f8f8f8"/><stop offset="0.45" stop-color="#b0b0b0"/><stop offset="1" stop-color="#505050"/></radialGradient>
<radialGradient id="head" cx="0.35" cy="0.3" r="0.75"><stop offset="0" stop-color="#ececec"/><stop offset="0.35" stop-color="#c4c4c4"/><stop offset="0.75" stop-color="#a2a2a2"/><stop offset="1" stop-color="#7a7a7a"/></radialGradient>
<radialGradient id="rib" cx="0.42" cy="0.42" r="0.62" fx="0.4" fy="0.4"><stop offset="0" stop-color="#ffffff"/><stop offset="0.3" stop-color="#dcdcdc"/><stop offset="0.7" stop-color="#b2b2b2"/><stop offset="1" stop-color="#7c7c7c"/></radialGradient>
<radialGradient id="pel" cx="0.25" cy="0.3" r="0.8"><stop offset="0" stop-color="#e4e4e4"/><stop offset="0.5" stop-color="#c0c0c0"/><stop offset="1" stop-color="#8a8a8a"/></radialGradient>
<linearGradient id="scap" x1="0" y1="0" x2="1" y2="1"><stop offset="0" stop-color="#d0d0d0"/><stop offset="1" stop-color="#8a8a8a"/></linearGradient>
<linearGradient id="foot" x1="0" y1="0" x2="0.3" y2="1"><stop offset="0" stop-color="#dcdcdc"/><stop offset="0.6" stop-color="#b4b4b4"/><stop offset="1" stop-color="#7a7a7a"/></linearGradient>
</defs>
<path d="M656 54 L968 82" stroke="#dcdcdc" stroke-width="2.2"/>
<circle cx="653.4" cy="53.1" r="7.5" fill="url(#sph)"/>
<circle cx="979.1" cy="83.9" r="10.8" fill="url(#sph2)"/>
<path d="M735 99L768 130" stroke="#6a6a6a" stroke-width="4.2" stroke-linecap="round"/><path d="M735 99L768 130" stroke="#c8c8c8" stroke-width="3" stroke-linecap="round"/>
<path d="M711.8 73.3 L732 99" stroke="#2e2e2e" stroke-width="3.6" stroke-linecap="round"/>
<path d="M716 72.8 L736.3 97.5" stroke="#2e2e2e" stroke-width="3.6" stroke-linecap="round"/>
<path d="M711.8 73.3 L732 99" stroke="#c8c8c8" stroke-width="2.4" stroke-linecap="round"/>
<path d="M716 72.8 L736.3 97.5" stroke="#b0b0b0" stroke-width="2.4" stroke-linecap="round"/>
<circle cx="734" cy="99" r="2.3" fill="#b0b0b0"/>
<path d="M833.5 120 L862.5 86.8" stroke="#2e2e2e" stroke-width="3.6" stroke-linecap="round"/>
<path d="M837.3 122 L866 90" stroke="#2e2e2e" stroke-width="3.6" stroke-linecap="round"/>
<path d="M833.5 120 L862.5 86.8" stroke="#cacaca" stroke-width="2.4" stroke-linecap="round"/>
<path d="M837.3 122 L866 90" stroke="#acacac" stroke-width="2.3" stroke-linecap="round"/>
<path d="M805 137 L830.7 122.2" stroke="#3a3a3a" stroke-width="4.2" stroke-linecap="round"/>
<path d="M805 137 L830.7 122.2" stroke="#c0c0c0" stroke-width="3.2" stroke-linecap="round"/>
<ellipse cx="805" cy="137.5" rx="3.6" ry="3" fill="#bdbdbd"/>
<circle cx="830.7" cy="122" r="3.2" fill="#c6c6c6"/>
<path d="M756.7 121 L768.6 131.7" stroke="#444" stroke-width="3.6" stroke-linecap="round"/>
<path d="M756.7 121 L768.6 131.7" stroke="#c4c4c4" stroke-width="2.6" stroke-linecap="round"/>
<path d="M734 109 C734 100 741 94.5 750 94.5 C758 94.5 764.5 99.5 764.5 106 C764.5 112 761 116 757 118.5 C754 121 752.5 126 751.5 130 C749 133 745 133 742 131.5 C738 128 737 122 736 118 C734.5 115 734 112 734 109Z" fill="url(#head)"/>
<path d="M749.5 134.1 L765 137.7 L763.9 146 L755.5 142.4Z" fill="url(#scap)"/>
<path d="M792.5 138.9 L804.4 140.7 L802 150.8 L799.7 146Z" fill="#7a7a7a"/>
<path d="M782 134 C795 134 805 148 806 166 C807 184 801 196 790 197.5 C780 198.5 772 196 766 192 C761 189 757 188 756 183 C754 170 757 154 765 143 C770 137 776 134 782 134Z" fill="url(#rib)"/>
<path d="M757 184 C760 190 766 192 772 196" stroke="#555" stroke-width="1" fill="none"/>
<path d="M758 185 C761 182 767 183 771 188 C769 189 766 190 764 191Z" fill="#8e8e8e"/>
<path d="M772.2 143.6 Q788 139 800.9 132.9" stroke="#3a3a3a" stroke-width="3" fill="none" stroke-linecap="round"/><path d="M772.2 143.6 Q788 139 800.9 132.9" stroke="#d4d4d4" stroke-width="1.8" fill="none" stroke-linecap="round"/>
<path d="M771.6 128.1 L767.4 142.4" stroke="#3a3a3a" stroke-width="3.4" stroke-linecap="round"/><path d="M771.6 128.1 L767.4 142.4" stroke="#c8c8c8" stroke-width="2.4" stroke-linecap="round"/>
<path d="M773.4 213.9 C774 207 779.3 202.5 788.9 201.3 C796 200.5 803 201.5 806.8 204.3 C810 208 811.5 216 812.7 225.8 C813 229 811.5 231 808 232.5 C803 234.5 797 233 794.8 230.6 C790 228 786 225 782.9 223.4 C778 221 774.5 219 773.4 213.9Z" fill="url(#pel)"/>
<path d="M792 211 C796 208.5 802 208.5 806 210 C807.5 215 808 220 807.5 225 C805 228 803 229.5 801 230 C798 226 795 222 793 217.4 C792.3 215 791.8 213 792 211Z" fill="#141414"/>
<path d="M794.8 202 L806.8 204.3 L806 209.5 L795 210Z" fill="#a4a4a4"/>
<circle cx="812.5" cy="227" r="2.6" fill="#d8d8d8"/>
<path d="M779.5 240 L760.5 276" stroke="#1616c0" stroke-width="5.6" stroke-linecap="round"/>
<path d="M777 246 L763 273" stroke="#4a4aff" stroke-width="1.4" stroke-linecap="round"/>
<path d="M771.5 285.2 L785.8 316.7" stroke="#1414b0" stroke-width="4" stroke-linecap="round"/>
<path d="M784.4 225 Q779 252 767.2 273.7" stroke="#505050" stroke-width="4.2" fill="none" stroke-linecap="round"/>
<path d="M784.4 225 Q779 252 767.2 273.7" stroke="#d0d0d0" stroke-width="3" fill="none" stroke-linecap="round"/>
<circle cx="765.8" cy="277" r="4" fill="#d2d2d2"/>
<path d="M767.2 281 L778.7 325.3" stroke="#505050" stroke-width="4.8" stroke-linecap="round"/>
<path d="M767.2 281 L778.7 325.3" stroke="#c8c8c8" stroke-width="3.8" stroke-linecap="round"/>
<path d="M777 322 C782 322 786 325 786.5 329 C787 333 785 335.5 781 336 L757 338.5 L745 339 C742.5 339 741.5 336.5 742 334.5 C742.5 332 744 331 746 330.5 L754.3 329.3 L770 325 C773 323 775 322 777 322Z" fill="url(#foot)"/>
<path d="M751.5 330 L751.5 338.5" stroke="#555" stroke-width="0.7"/>
<path d="M816 252 L809.5 292.3" stroke="#1616c0" stroke-width="5.8" stroke-linecap="round"/>
<path d="M814 259 L810.5 288" stroke="#5050ff" stroke-width="1.4" stroke-linecap="round"/>
<path d="M818.3 232 Q817 262 811.6 292.3" stroke="#505050" stroke-width="3.8" fill="none" stroke-linecap="round"/>
<path d="M818.3 232 Q817 262 811.6 292.3" stroke="#d0d0d0" stroke-width="2.8" fill="none" stroke-linecap="round"/>
<circle cx="818.3" cy="232" r="3.2" fill="#c8c8c8"/>
<path d="M819 299 L825.5 336" stroke="#1414b0" stroke-width="3.6" stroke-linecap="round"/>
<circle cx="811.8" cy="294.5" r="3.5" fill="#d0d0d0"/>
<path d="M811.6 297 L824.6 342" stroke="#505050" stroke-width="4.8" stroke-linecap="round"/>
<path d="M811.6 297 L824.6 342" stroke="#c8c8c8" stroke-width="3.8" stroke-linecap="round"/>
<path d="M817.2 296 L826.4 336.7" stroke="#505050" stroke-width="2" stroke-linecap="round"/>
<path d="M817.2 296 L826.4 336.7" stroke="#b8b8b8" stroke-width="1.2" stroke-linecap="round"/>
<path d="M819 338 C823 337.5 827 339 829 343 C831.5 349 833 356 833 362 C833 367 831.5 370 828 371.5 C824 373 818 373 815.5 371.5 C813 370 812.8 367 813 364 C813.5 358 815 351 816 345 C816.5 341 817 338.5 819 338Z" fill="url(#foot)"/>
<path d="M822 362 L822 373" stroke="#555" stroke-width="0.7"/>
<path d="M633.7 363.7V329.4" stroke="#2020c0" stroke-width="1.3"/>
<path d="M633.7 363.7L609 370.8" stroke="#c02020" stroke-width="1.3"/>
<path d="M633.7 363.7L659.7 370.8" stroke="#20a020" stroke-width="1.3"/>
</svg>
</div>
<div class="a" style="left:597px;top:388px;width:72px;height:18.7px;background:rgba(118,106,68,0.9);border:1.3px solid #e0d9b8;box-sizing:border-box;"></div>
<div class="t" style="left:609.50px;top:389.90px;font-size:11.3px;line-height:13.56px;color:#15130a;font-weight:normal;word-spacing:2px;">Turn 180°</div>
<div class="a" style="left:0px;top:412.5px;width:1030px;height:6.5px;background:#b8b8b8;"></div>
<div class="a" style="left:3px;top:412.5px;width:1027px;height:2.3px;background:#e6e6e6;"></div>
<div class="a" style="left:2px;top:417px;width:97px;height:2px;background:#6c6ca4;"></div>
</body></html>
